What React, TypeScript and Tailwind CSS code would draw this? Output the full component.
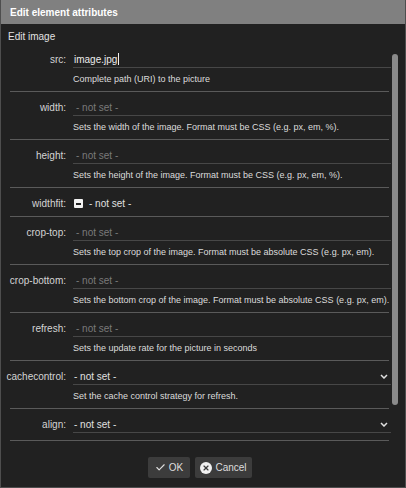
import { Check, X } from 'lucide-react';

interface Field {
  label: string;
  kind: 'text' | 'check' | 'select';
  value?: string;
  desc?: string;
}

const fields: Field[] = [
  { label: 'src:', kind: 'text', value: 'image.jpg', desc: 'Complete path (URI) to the picture' },
  { label: 'width:', kind: 'text', desc: 'Sets the width of the image. Format must be CSS (e.g. px, em, %).' },
  { label: 'height:', kind: 'text', desc: 'Sets the height of the image. Format must be CSS (e.g. px, em, %).' },
  { label: 'widthfit:', kind: 'check' },
  { label: 'crop-top:', kind: 'text', desc: 'Sets the top crop of the image. Format must be absolute CSS (e.g. px, em).' },
  { label: 'crop-bottom:', kind: 'text', desc: 'Sets the bottom crop of the image. Format must be absolute CSS (e.g. px, em).' },
  { label: 'refresh:', kind: 'text', desc: 'Sets the update rate for the picture in seconds' },
  { label: 'cachecontrol:', kind: 'select', desc: 'Set the cache control strategy for refresh.' },
  { label: 'align:', kind: 'select' },
];

function Chevron() {
  return (
    <svg width="8" height="5" viewBox="0 0 8 5" className="shrink-0">
      <polyline points="1,1 4,4 7,1" fill="none" stroke="#e0e0e0" strokeWidth="1.5" />
    </svg>
  );
}

function FieldRow({ field }: { field: Field }) {
  return (
    <div className={`border-b border-[#5a5a5a] pt-[7px] ${field.desc ? '' : field.kind === 'check' ? 'pb-[4px]' : 'pb-[7px]'}`}>
      <div className="flex gap-[7px]">
        <div className="w-[56px] shrink-0 flex justify-end items-center h-[16px] whitespace-nowrap text-[10px] text-[#d4d4d4]">
          {field.label}
        </div>
        {field.kind === 'check' ? (
          <div className="flex-1 flex items-center gap-[6px] h-[17px] text-[10px] text-[#e0e0e0]">
            <span className="ml-[1px] w-[9px] h-[9px] bg-[#f2f2f2] rounded-[1px] flex items-center justify-center">
              <span className="w-[5px] h-[2px] bg-[#222]" />
            </span>
            - not set -
          </div>
        ) : (
          <div className="flex-1 -mr-[2px] h-[17px] border-b border-[#474747] flex items-center justify-between pl-[1px] pr-[3px] text-[10px]">
            {field.kind === 'select' ? (
              <>
                <span className="text-[#e0e0e0]">- not set -</span>
                <Chevron />
              </>
            ) : field.value ? (
              <span className="flex items-center text-[#ececec]">
                {field.value}
                <span className="w-px h-[12px] bg-[#f0f0f0] ml-px" />
              </span>
            ) : (
              <span className="pl-[2px] text-[#7a7a7a]">- not set -</span>
            )}
          </div>
        )}
      </div>
      {field.desc && (
        <div className="h-[23px] flex items-center pl-[63px] text-[9px] text-[#dcdcdc] whitespace-nowrap">
          {field.desc}
        </div>
      )}
    </div>
  );
}

export default function App() {
  return (
    <div className="w-[406px] h-[488px] bg-[#212121] border-x border-b border-[#4e4e4e] flex flex-col font-['Liberation_Sans',Arial,sans-serif] overflow-hidden">
      {/* Header */}
      <div className="h-[24px] shrink-0 bg-[#808080] flex items-center pl-[9px] text-[10px] font-bold text-white">
        Edit element attributes
      </div>

      <div className="h-[20px] shrink-0 pt-[7px] pl-[7px] text-[10px] leading-[12px] text-[#e2e2e2]">
        Edit image
      </div>

      {/* Body */}
      <div className="h-[404px] shrink-0 flex overflow-hidden">
        <div className="w-[379px] ml-[9px] shrink-0">
          {fields.map((f) => (
            <FieldRow key={f.label} field={f} />
          ))}
        </div>
        <div className="ml-[3px] w-[6px] shrink-0">
          <div className="mt-[10px] h-[351px] rounded-full bg-[#8a8a8a]" />
        </div>
      </div>

      {/* Footer */}
      <div className="flex-1 flex justify-center gap-[5px] pt-[9px] pr-[6px]">
        <button className="h-[21px] w-[42px] bg-[#3c3c3c] rounded-[2px] flex items-center justify-center gap-[3px] text-[10px] text-[#dedede]">
          <Check className="w-[11px] h-[11px]" strokeWidth={2.5} />
          OK
        </button>
        <button className="h-[21px] w-[57px] bg-[#3c3c3c] rounded-[2px] flex items-center justify-center gap-[3px] text-[10px] text-[#dedede]">
          <span className="w-[12px] h-[12px] rounded-full bg-[#f0f0f0] flex items-center justify-center">
            <X className="w-[8px] h-[8px] text-[#3c3c3c]" strokeWidth={3.5} />
          </span>
          Cancel
        </button>
      </div>
    </div>
  );
}
